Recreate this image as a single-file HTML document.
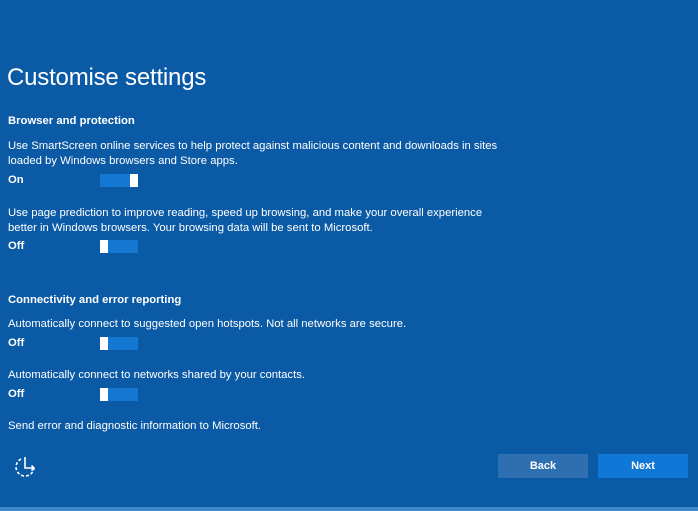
<!DOCTYPE html>
<html><head><style>
body{margin:0;width:698px;height:511px;background:#0b5aa5;font-family:"Liberation Sans",sans-serif;color:#fff;position:relative;overflow:hidden}
.t{position:absolute;left:8px;font-size:11.3px;line-height:15px;white-space:nowrap}
.b{font-weight:bold}
h1{position:absolute;left:7px;top:64px;margin:0;font-weight:normal;font-size:24px;letter-spacing:-0.2px}
.tg{position:absolute;left:100px;width:38px;height:13px;background:#1477d2}
.tg i{position:absolute;top:0;width:8px;height:13px;background:#fff}
.on i{right:0}.off i{left:0}
.btn{position:absolute;top:454px;height:24px;width:90px;font-size:11px;font-weight:bold;text-align:center;line-height:24px}
</style></head><body>
<h1>Customise settings</h1>
<div class="t b" style="top:114px">Browser and protection</div>
<div class="t" style="top:139px">Use SmartScreen online services to help protect against malicious content and downloads in sites<br>loaded by Windows browsers and Store apps.</div>
<div class="t b" style="top:173px">On</div>
<div class="tg on" style="top:174px"><i></i></div>
<div class="t" style="top:206px">Use page prediction to improve reading, speed up browsing, and make your overall experience<br>better in Windows browsers. Your browsing data will be sent to Microsoft.</div>
<div class="t b" style="top:239px">Off</div>
<div class="tg off" style="top:240px"><i></i></div>
<div class="t b" style="top:293px">Connectivity and error reporting</div>
<div class="t" style="top:317px">Automatically connect to suggested open hotspots. Not all networks are secure.</div>
<div class="t b" style="top:336px">Off</div>
<div class="tg off" style="top:337px"><i></i></div>
<div class="t" style="top:368px">Automatically connect to networks shared by your contacts.</div>
<div class="t b" style="top:387px">Off</div>
<div class="tg off" style="top:388px"><i></i></div>
<div class="t" style="top:419px">Send error and diagnostic information to Microsoft.</div>
<svg style="position:absolute;left:12px;top:454px" width="26" height="26" viewBox="0 0 26 26" fill="none" stroke="#fff" stroke-width="1.6">
<path d="M9 5 A9 9 0 1 0 22 14" stroke-dasharray="3 2"/>
<path d="M13 3 V14 H22 M19.5 11.5 L22 14 L19.5 16.5"/>
</svg>
<div class="btn" style="left:498px;background:#2d6fb1">Back</div>
<div class="btn" style="left:598px;background:#0f78d6">Next</div>
<div style="position:absolute;left:0;top:507px;width:698px;height:4px;background:#3d86c8"></div>
</body></html>
